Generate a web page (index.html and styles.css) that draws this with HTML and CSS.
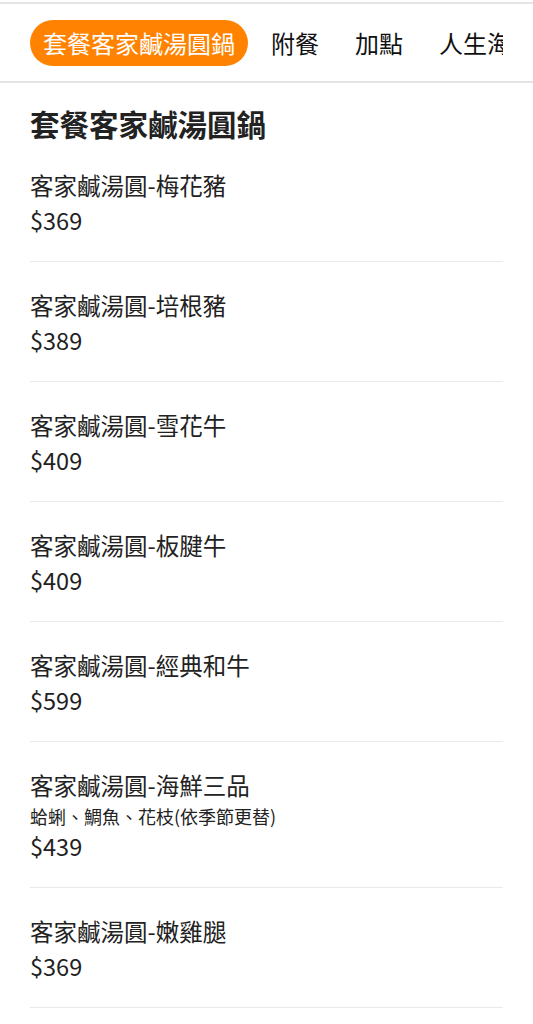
FILE: index.html
```html
<!DOCTYPE html>
<html lang="zh-Hant">
<head>
    <meta charset="UTF-8">
    <meta name="viewport" content="width=device-width, initial-scale=1.0">
    <title>菜單</title>
    <link rel="stylesheet" href="styles.css">
</head>
<body>
    <nav class="tabbar">
        <div class="tabs">
            <a class="tab active">套餐客家鹹湯圓鍋</a>
            <a class="tab">附餐</a>
            <a class="tab">加點</a>
            <a class="tab">人生海海</a>
        </div>
    </nav>

    <section class="menu">
        <h2 class="menu-title">套餐客家鹹湯圓鍋</h2>
        <ul class="items">
            <li class="item">
                <p class="name">客家鹹湯圓-梅花豬</p>
                <p class="price">$369</p>
            </li>
            <li class="item">
                <p class="name">客家鹹湯圓-培根豬</p>
                <p class="price">$389</p>
            </li>
            <li class="item">
                <p class="name">客家鹹湯圓-雪花牛</p>
                <p class="price">$409</p>
            </li>
            <li class="item">
                <p class="name">客家鹹湯圓-板腱牛</p>
                <p class="price">$409</p>
            </li>
            <li class="item">
                <p class="name">客家鹹湯圓-經典和牛</p>
                <p class="price">$599</p>
            </li>
            <li class="item">
                <p class="name">客家鹹湯圓-海鮮三品</p>
                <p class="desc">蛤蜊、鯛魚、花枝(依季節更替)</p>
                <p class="price">$439</p>
            </li>
            <li class="item">
                <p class="name">客家鹹湯圓-嫩雞腿</p>
                <p class="price">$369</p>
            </li>
        </ul>
    </section>
</body>
</html>
```

FILE: styles.css
```css
body {
    margin: 0;
    padding-top: 2px;
    font-family: "Noto Sans CJK TC", "Noto Sans", sans-serif;
    color: #222;
    background: #fff;
}
p {margin: 0;}

.tabbar {
    border-top: 2px solid #e4e4e4;
    border-bottom: 2px solid #e4e4e4;
    height: 77px;
    display: flex;
    align-items: center;
}
.tabs {
    display: flex;
    gap: 10px;
    margin: 0 30px;
    overflow: hidden;
    white-space: nowrap;
    flex: 1;
}
.tab {
    flex: none;
    font-size: 24px;
    line-height: 46px;
    padding: 0 13px;
    border-radius: 23px;
    color: #111;
}
.tab.active {
    background: #ff8300;
    color: #fff;
}

.menu {
    padding: 0 30px;
}
.menu-title {
    margin: 21px 0 0;
    font-size: 29.5px;
    line-height: 38px;
    font-weight: bold;
    color: #222;
}
.items {
    list-style: none;
    margin: 0;
    padding: 0;
}
.item {
    padding: 26px 0 23px;
    border-bottom: 1px solid #e9e9e9;
}
.name, .price {
    font-size: 23.5px;
    line-height: 35px;
}
.desc {
    font-size: 18px;
    line-height: 26px;
}
```
